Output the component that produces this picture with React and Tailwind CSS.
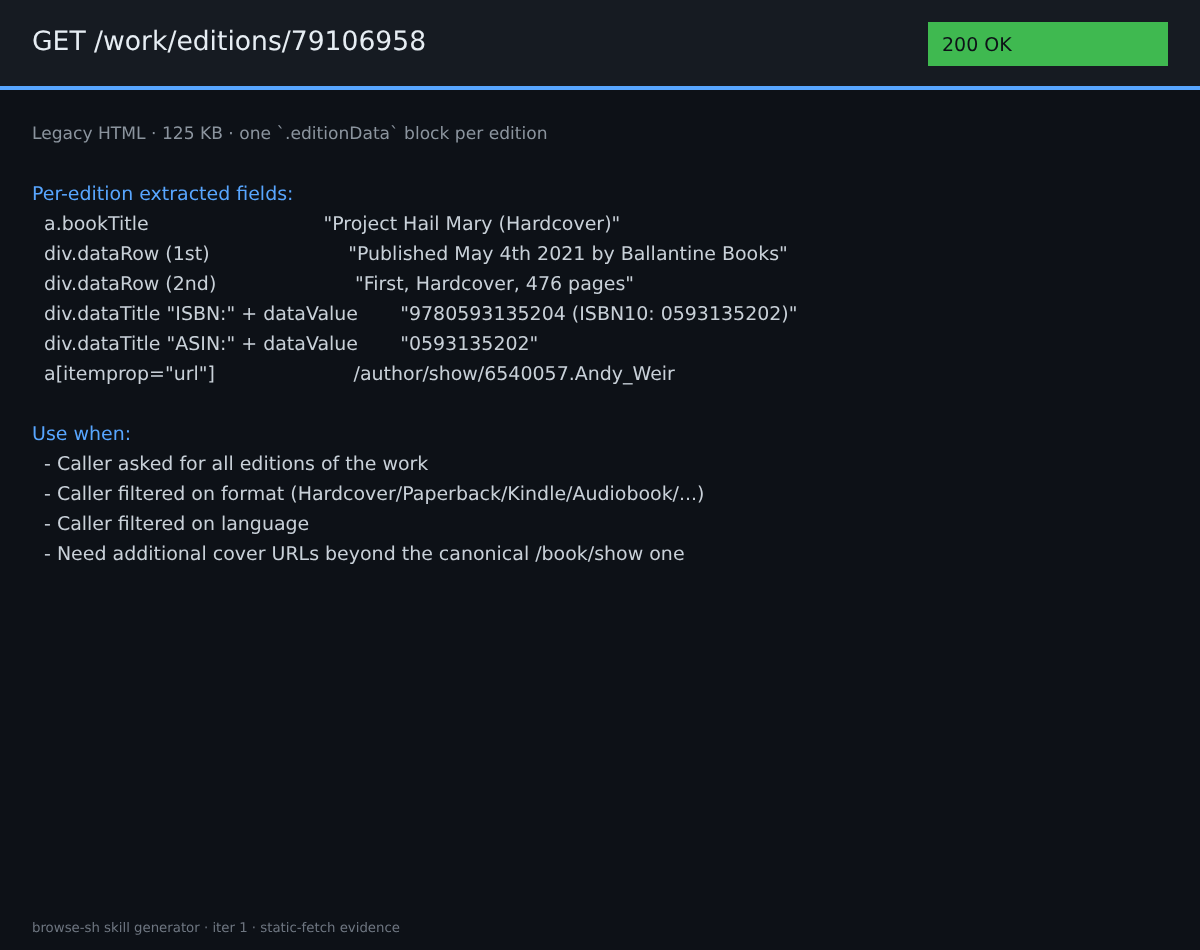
const rows = [
  '  a.bookTitle                             "Project Hail Mary (Hardcover)"',
  '  div.dataRow (1st)                       "Published May 4th 2021 by Ballantine Books"',
  '  div.dataRow (2nd)                       "First, Hardcover, 476 pages"',
  '  div.dataTitle "ISBN:" + dataValue       "9780593135204 (ISBN10: 0593135202)"',
  '  div.dataTitle "ASIN:" + dataValue       "0593135202"',
  '  a[itemprop="url"]                       /author/show/6540057.Andy_Weir',
];
const uses = [
  '  - Caller asked for all editions of the work',
  '  - Caller filtered on format (Hardcover/Paperback/Kindle/Audiobook/...)',
  '  - Caller filtered on language',
  '  - Need additional cover URLs beyond the canonical /book/show one',
];
export default function App() {
  return (
    <div className="flex flex-col w-[1200px] h-[950px] bg-[#0d1117] text-[#c9d1d9] font-['DejaVu_Sans',sans-serif] antialiased [text-rendering:geometricPrecision]">
      <header className="flex justify-between h-[90px] px-8 pt-[22px] bg-[#161b22] border-b-4 border-[#58a6ff]">
        <h1 className="text-[26.6px] leading-[38px] translate-y-[0.5px] text-[#e6edf3] font-normal blur-[0.3px]">GET /work/editions/79106958</h1>
        <div className="w-[240px] h-11 px-[14px] pt-[2px] flex items-center bg-[#3fb950] text-[#0d1117] text-[19px]"><span className="blur-[0.3px]">200 OK</span></div>
      </header>
      <main className="flex-1 px-8 pt-8 text-[18.98px] leading-[30px] whitespace-pre">
        <div className="text-[17.1px] leading-[24px] text-[#8b949e] mb-[33px] blur-[0.3px]">Legacy HTML · 125 KB · one `.editionData` block per edition</div>
        <div className="blur-[0.3px]">
          <div className="text-[#58a6ff]">Per-edition extracted fields:</div>
          {rows.map((r) => <div key={r}>{r}</div>)}
          <div className="h-[30px]" />
          <div className="text-[#58a6ff]">Use when:</div>
          {uses.map((r) => <div key={r}>{r}</div>)}
        </div>
      </main>
      <footer className="px-8 pb-[12px] text-[13.3px] leading-[18px] text-[#6e7681] blur-[0.3px]">browse-sh skill generator · iter 1 · static-fetch evidence</footer>
    </div>
  );
}
